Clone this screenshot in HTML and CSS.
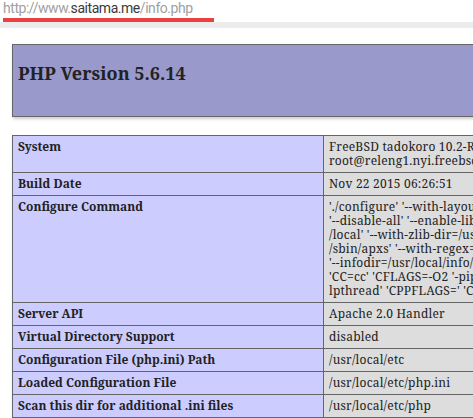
FILE: index.html
```html
<!DOCTYPE html>
<html>
<head>
<meta charset="utf-8">
<link rel="stylesheet" href="styles.css">
</head>
<body>
<div class="urlbar">
  <div class="url"><span class="dim">http://www.</span><span class="host">saitama.me</span><span class="dim">/info.php</span></div>
  <div class="mark"></div>
</div>
<div class="page">
  <div class="header">
    <h1 class="title">PHP Version 5.6.14</h1>
  </div>
  <table class="info">
    <colgroup><col class="c-e"><col class="c-v"></colgroup>
    <tr><td class="e">System</td><td class="v">FreeBSD tadokoro 10.2-RELEASE-p7 FreeBSD 10.2-RELEASE-p7 #0: Mon Nov 2 14:19:39 UTC 2015<br>root@releng1.nyi.freebsd.org:/usr/obj/usr/src/sys/GENERIC amd64</td></tr>
    <tr><td class="e">Build Date</td><td class="v">Nov 22 2015 06:26:51</td></tr>
    <tr><td class="e">Configure Command</td><td class="v">'./configure' '--with-layout=GNU' '--localstatedir=/var' '--with-config-file-scan-dir=/usr/local/etc/php'<br>'--disable-all' '--enable-libxml' '--with-libxml-dir=/usr<br>/local' '--with-zlib-dir=/usr' '--with-apxs2=/usr/local<br>/sbin/apxs' '--with-regex=php' '--program-prefix='<br>'--infodir=/usr/local/info/' '--build=amd64-portbld-freebsd10.2'<br>'CC=cc' 'CFLAGS=-O2 '-pipe -fstack-protector -fno-strict-aliasing' 'LIBS=-<br>lpthread' 'CPPFLAGS=' 'CPP=cpp' 'CXX=c++'</td></tr>
    <tr><td class="e">Server API</td><td class="v">Apache 2.0 Handler</td></tr>
    <tr><td class="e">Virtual Directory Support</td><td class="v">disabled</td></tr>
    <tr><td class="e">Configuration File (php.ini) Path</td><td class="v">/usr/local/etc</td></tr>
    <tr><td class="e">Loaded Configuration File</td><td class="v">/usr/local/etc/php.ini</td></tr>
    <tr><td class="e">Scan this dir for additional .ini files</td><td class="v">/usr/local/etc/php</td></tr>
  </table>
</div>
</body>
</html>
```
FILE: styles.css
```css
html, body {
  margin: 0;
  padding: 0;
  background: #fff;
  overflow: hidden;
}
body {
  width: 473px;
  height: 418px;
  font-family: "Noto Serif", "Liberation Serif", serif;
  color: #222;
}
.urlbar {
  height: 22px;
  border-bottom: 6px solid #ececec;
  background: #fff;
}
.url {
  font-family: Roboto, "Noto Sans", sans-serif;
  font-size: 14px;
  letter-spacing: -0.45px;
  line-height: 17px;
  padding-left: 3px;
  white-space: nowrap;
}
.dim { color: #a0a0a0; }
.host { color: #3a3a3a; }
.mark {
  margin-left: 3px;
  margin-top: 1px;
  width: 211px;
  height: 4px;
  background: #e8413f;
}
.page {
  padding: 16px 0 0 12px;
}
.header {
  width: 934px;
  height: 71px;
  border: 1px solid #666;
  background: #99c;
  box-shadow: 1px 2px 3px #ccc;
  padding: 0 5px;
}
.title {
  margin: 0;
  padding-top: 19px;
  font-size: 18px;
  line-height: 18px;
  font-weight: bold;
  color: #222;
}
.info {
  margin-top: 18px;
  border-collapse: collapse;
  table-layout: fixed;
  width: 934px;
  box-shadow: 1px 2px 3px #ccc;
}
.c-e { width: 311px; }
.info td {
  border: 1px solid #666;
  padding: 4px 5px;
  font-size: 12px;
  line-height: 14px;
  vertical-align: baseline;
  white-space: nowrap;
  overflow: hidden;
}
.e {
  background: #ccf;
  font-weight: bold;
}
.v {
  background: #ddd;
  letter-spacing: 0.2px;
}
```
